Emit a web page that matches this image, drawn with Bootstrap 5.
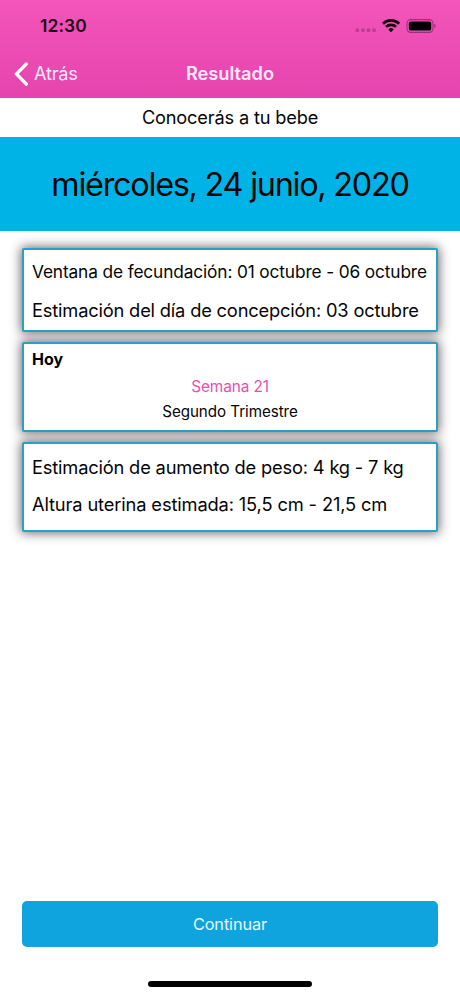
<!DOCTYPE html>
<html lang="es">
<head>
<meta charset="utf-8">
<meta name="viewport" content="width=device-width, initial-scale=1">
<title>Resultado</title>
<link href="https://cdn.jsdelivr.net/npm/bootstrap@5.3.0/dist/css/bootstrap.min.css" rel="stylesheet">
<style>
  body { font-family: Inter, "Liberation Sans", sans-serif; color: #050505; height: 996px; overflow: hidden; }
  .app-header { height: 98px; background: linear-gradient(#f455ba, #e444ac); }
  .status-bar { height: 50px; padding: 2px 24px 0 40px; color: #1c0514; }
  .clock { font-size: 17.4px; font-weight: 600; letter-spacing: .1px; }
  .nav-row { height: 48px; display: grid; grid-template-columns: 1fr auto 1fr; color: #ffe9f8; padding: 0 14px; }
  .back-link { font-size: 18.2px; gap: 6px; letter-spacing: -.25px; }
  .nav-title { font-size: 18.2px; font-weight: 600; letter-spacing: .03px; }
  .subtitle { height: 39px; font-size: 18.2px; padding-top: 1px; letter-spacing: -.16px; }
  .date-band { height: 94px; background: #00b3e6; font-size: 32.3px; letter-spacing: -1.2px; padding-top: 2px; }
  .results { padding: 17px 22px 0; }
  .result-box { border: 2px solid #2b9fc9; border-radius: 2px; background: #fff; padding: 0 8px; box-shadow: 0 0 11px 1px rgba(40,30,35,.68); white-space: nowrap; }
  .box-dates { height: 84px; padding-top: 3px; margin-bottom: 10px; }
  .box-today { height: 90px; padding-top: 1px; margin-bottom: 10px; }
  .box-body { height: 90px; padding-top: 5px; }
  .line-38 { line-height: 38px; }
  .line-37 { line-height: 37px; }
  .line-26 { line-height: 27px; }
  .line-today { line-height: 28px; }
  .t-window { font-size: 17.3px; letter-spacing: -.13px; }
  .t-main { font-size: 18.3px; letter-spacing: -.18px; }
  .t-height { letter-spacing: -.14px; }
  .t-today { font-size: 16px; font-weight: 700; color: #000; }
  .t-week { font-size: 15.4px; color: #e650b2; letter-spacing: -.12px; }
  .t-term { font-size: 15.2px; line-height: 23px; letter-spacing: -.06px; }
  .btn-next { height: 46px; border: 0; border-radius: 5px; background: #10a4df; color: #e6f8ff; font-size: 16.3px; letter-spacing: -.1px; padding: 0; }
  .btn-next:hover { background: #0d95cc; color: #fff; }
  .footer-zone { padding: 0 22px 9px; }
  .home-bar { width: 164px; height: 6px; background: #000; margin-top: 34px; }
</style>
</head>
<body class="d-flex flex-column bg-white">
  <header class="app-header flex-shrink-0">
    <div class="status-bar d-flex align-items-center justify-content-between">
      <span class="clock">12:30</span>
      <svg width="82" height="18" viewBox="0 0 82 18" aria-hidden="true">
        <g fill="#bd3e91"><rect x="1.500" y="11.500" width="3.600" height="3.600" rx="1"/><rect x="7.1" y="11.500" width="3.600" height="3.600" rx="1"/><rect x="12.7" y="11.500" width="3.600" height="3.600" rx="1"/><rect x="18.2" y="11.500" width="3.600" height="3.600" rx="1"/></g>
        <g fill="none" stroke="#12020c" stroke-width="2.7"><path d="M28.9 6.7a11.6 11.6 0 0 1 16.2 0"/><path d="M32 9.9a7.1 7.1 0 0 1 10 0"/></g>
        <path d="M34.3 12.4a3.9 3.9 0 0 1 5.4 0L37 15.2z" fill="#12020c"/>
        <rect x="53" y="2.6" width="26" height="12.8" rx="3.8" fill="none" stroke="#9b3078" stroke-width="1.1"/>
        <rect x="54.8" y="4.4" width="22.4" height="9.2" rx="2.2" fill="#050003"/>
        <path d="M80.3 7v4c1.8-.6 1.8-3.4 0-4z" fill="#9b3078"/>
      </svg>
    </div>
    <nav class="nav-row align-items-center">
      <a href="#" class="back-link d-flex align-items-center text-reset text-decoration-none">
        <svg width="14" height="24" viewBox="0 0 14 24" aria-hidden="true"><path d="M12.3 2 2.4 12l9.900 10" fill="none" stroke="#fff" stroke-width="3.2" stroke-linecap="round"/></svg>
        <span>Atrás</span>
      </a>
      <span class="nav-title">Resultado</span>
      <span></span>
    </nav>
  </header>
  <main class="flex-grow-1">
    <div class="subtitle d-flex align-items-center justify-content-center"><span>Conocerás a tu bebe</span></div>
    <div class="date-band d-flex align-items-center justify-content-center"><span>miércoles, 24 junio, 2020</span></div>
    <div class="results">
      <section class="result-box box-dates">
        <div class="line-38 t-window">Ventana de fecundación: 01 octubre - 06 octubre</div>
        <div class="line-38 t-main">Estimación del día de concepción: 03 octubre</div>
      </section>
      <section class="result-box box-today">
        <div class="line-today t-today">Hoy</div>
        <div class="line-26 t-week text-center">Semana 21</div>
        <div class="t-term text-center">Segundo Trimestre</div>
      </section>
      <section class="result-box box-body">
        <div class="line-37 t-main">Estimación de aumento de peso: 4 kg - 7 kg</div>
        <div class="line-37 t-main t-height">Altura uterina estimada: 15,5 cm - 21,5 cm</div>
      </section>
    </div>
  </main>
  <footer class="footer-zone">
    <button type="button" class="btn btn-next w-100 d-block">Continuar</button>
    <div class="home-bar rounded-pill mx-auto"></div>
  </footer>
<script src="https://cdn.jsdelivr.net/npm/bootstrap@5.3.0/dist/js/bootstrap.bundle.min.js"></script>
</body>
</html>
